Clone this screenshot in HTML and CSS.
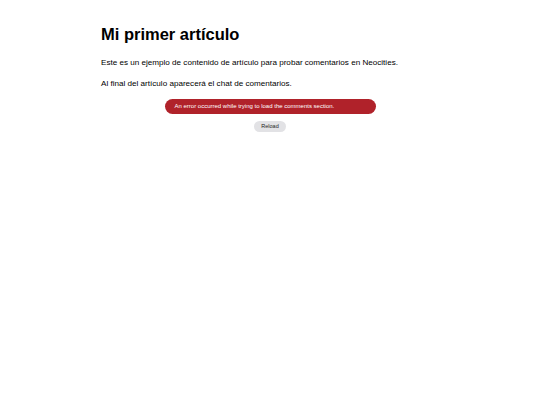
FILE: index.html
```html
<!DOCTYPE html>
<html lang="es">
<head>
<meta charset="utf-8">
<title>Mi primer artículo</title>
<link rel="stylesheet" href="styles.css">
</head>
<body>
<main class="article">
  <h1 class="title">Mi primer artículo</h1>
  <p class="text">Este es un ejemplo de contenido de artículo para probar comentarios en Neocities.</p>
  <p class="text">Al final del artículo aparecerá el chat de comentarios.</p>
  <section class="comments">
    <div class="error">An error occurred while trying to load the comments section.</div>
    <button class="reload">Reload</button>
  </section>
</main>
</body>
</html>
```

FILE: styles.css
```css
html, body {
  margin: 0;
  padding: 0;
  background: #ffffff;
}
body {
  font-family: "Liberation Sans", Arial, sans-serif;
  color: #000;
}
.article {
  width: 338px;
  margin: 0 auto;
  padding-top: 24px;
}
.title {
  font-size: 16.5px;
  font-weight: bold;
  margin: 0 0 12px 0;
  line-height: 21px;
}
.text {
  font-size: 8.1px;
  line-height: 12px;
  margin: 0 0 9px 0;
}
.comments {
  display: flex;
  flex-direction: column;
  align-items: center;
  gap: 7px;
  margin-top: 2px;
}
.error {
  width: 211px;
  box-sizing: border-box;
  background: #b0222a;
  color: #fff;
  font-size: 6px;
  line-height: 15px;
  height: 15px;
  padding: 0 10px;
  border-radius: 8px;
}
.reload {
  font-family: inherit;
  font-size: 5.5px;
  background: #e2e2e5;
  color: #222;
  border: none;
  border-radius: 6px;
  height: 11px;
  padding: 0 7px;
  line-height: 11px;
}
```
